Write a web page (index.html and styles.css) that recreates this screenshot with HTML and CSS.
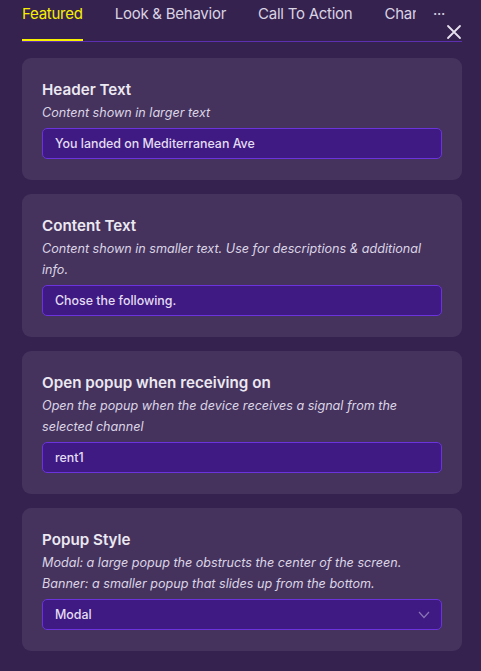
FILE: index.html
```html
<!DOCTYPE html>
<html lang="en">
<head>
<meta charset="utf-8">
<title>Popup settings</title>
<link rel="stylesheet" href="styles.css">
</head>
<body>
<div class="panel">
  <div class="tabbar">
    <div class="tabs">
      <div class="tab active">Featured</div>
      <div class="tab">Look &amp; Behavior</div>
      <div class="tab">Call To Action</div>
      <div class="tab last">Channels</div>
    </div>
    <div class="more">···</div>
  </div>
  <button class="close" aria-label="Close">
    <svg width="16" height="16" viewBox="0 0 16 16"><path d="M2 2 L14 14 M14 2 L2 14" stroke="#e6e1ee" stroke-width="1.8" stroke-linecap="round" fill="none"/></svg>
  </button>

  <div class="cards">
    <section class="card">
      <h3 class="title">Header Text</h3>
      <p class="desc">Content shown in larger text</p>
      <div class="field">You landed on Mediterranean Ave</div>
    </section>
    <section class="card">
      <h3 class="title">Content Text</h3>
      <p class="desc">Content shown in smaller text. Use for descriptions &amp; additional info.</p>
      <div class="field">Chose the following.</div>
    </section>
    <section class="card">
      <h3 class="title">Open popup when receiving on</h3>
      <p class="desc">Open the popup when the device receives a signal from the selected channel</p>
      <div class="field">rent1</div>
    </section>
    <section class="card">
      <h3 class="title">Popup Style</h3>
      <p class="desc">Modal: a large popup the obstructs the center of the screen.<br>Banner: a smaller popup that slides up from the bottom.</p>
      <div class="field select">
        <span>Modal</span>
        <svg width="12" height="8" viewBox="0 0 12 8"><path d="M1 1 L6 6.5 L11 1" stroke="#8a74b6" stroke-width="1.2" fill="none"/></svg>
      </div>
    </section>
  </div>
</div>
</body>
</html>
```

FILE: styles.css
```css
* { box-sizing: border-box; }
html, body { margin: 0; padding: 0; }
body {
  background: #36224f;
  font-family: Inter, "Noto Sans", sans-serif;
  color: #ebe6f1;
  width: 481px;
  height: 671px;
  overflow: hidden;
}
.panel {
  position: relative;
  padding: 0 19px 0 22px;
}
.tabbar {
  display: flex;
  align-items: flex-start;
  border-bottom: 1px solid #5b2fb0;
  height: 42px;
}
.tabs {
  display: flex;
  gap: 32px;
  width: 394px;
  overflow: hidden;
  white-space: nowrap;
}
.tab {
  font-size: 15px;
  line-height: 20px;
  padding-top: 4px;
  height: 41px;
  color: #d9d3e3;
  flex: none;
  letter-spacing: -0.25px;
}
.tab.last {
  flex: 0 1 auto;
  min-width: 0;
  overflow: hidden;
}
.tab.active {
  color: #f7f000;
  border-bottom: 2px solid #f7f000;
}
.more {
  margin-left: 17px;
  font-size: 15px;
  line-height: 20px;
  padding-top: 4px;
  color: #d9d3e3;
  letter-spacing: -0.3px;
}
.close {
  position: absolute;
  right: 19px;
  top: 24px;
  width: 16px;
  height: 16px;
  padding: 0;
  border: 0;
  background: none;
  display: flex;
}
.cards {
  display: flex;
  flex-direction: column;
  gap: 14px;
  padding-top: 16px;
}
.card {
  background: #45335d;
  border-radius: 9px;
  padding: 20px 20px 21px;
}
.title {
  margin: 0;
  font-size: 15.2px;
  line-height: 24px;
  font-weight: 600;
  color: #ece8f2;
}
.desc {
  margin: 0 0 5px;
  font-size: 12.6px;
  line-height: 21px;
  font-style: italic;
  color: #dcd5e6;
}
.field {
  height: 31px;
  border: 1px solid #6a33db;
  border-radius: 5px;
  background: #3e1a82;
  padding: 0 12px;
  font-size: 12.4px;
  font-weight: 500;
  line-height: 29px;
  color: #e4ddf2;
}
.select {
  display: flex;
  align-items: center;
  justify-content: space-between;
  padding-right: 11px;
}
```
